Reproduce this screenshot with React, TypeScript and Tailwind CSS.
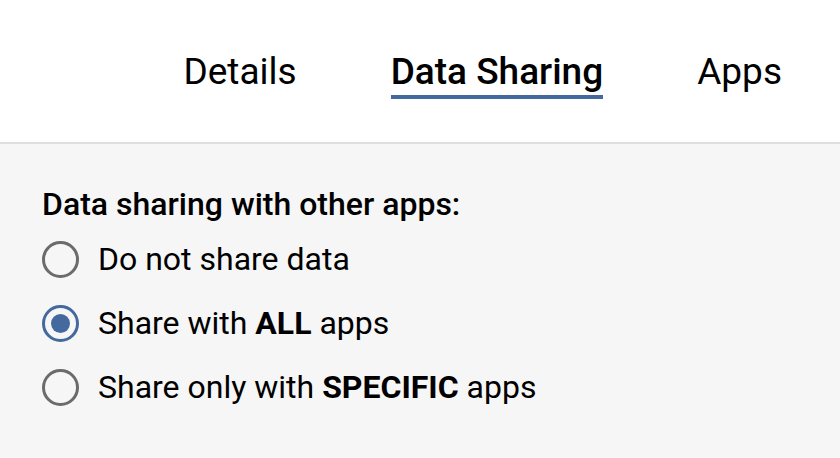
import React from "react"

const options = [
  { key: "none", label: <>Do not share data</> },
  { key: "all", label: <>Share with <b className="font-bold">ALL</b> apps</> },
  { key: "specific", label: <>Share only with <b className="font-bold">SPECIFIC</b> apps</> },
]

function Radio({ checked }: { checked: boolean }) {
  return (
    <span
      className={`flex items-center justify-center w-[37px] h-[37px] rounded-full border-[3px] shrink-0 ${
        checked ? "border-[#44699f]" : "border-[#6b6b6b]"
      }`}
    >
      {checked && <span className="w-[19px] h-[19px] rounded-full bg-[#44699f]" />}
    </span>
  )
}

export default function App() {
  const [selected, setSelected] = React.useState("all")

  return (
    <div className="w-[840px] h-[458px] flex flex-col bg-[#f6f6f6] text-black" style={{ fontFamily: "Roboto, sans-serif" }}>
      {/* tabs */}
      <div className="h-[144px] bg-white border-b-2 border-[#dedede] flex items-start justify-end pr-[58px] pt-[50px] gap-[94px] shrink-0">
        <button className="text-[37px] leading-[44px]">Details</button>
        <button className="text-[37px] leading-[44px] font-medium pb-[1px] border-b-[4px] border-[#44699f]">Data Sharing</button>
        <button className="text-[37px] leading-[44px]">Apps</button>
      </div>

      {/* content */}
      <div className="px-[42px] pt-[39px]">
        <p className="text-[32px] leading-[42px] font-medium mb-[2px]">Data sharing with other apps:</p>
        <div className="flex flex-col">
          {options.map((o) => (
            <label key={o.key} className="flex items-center gap-[19px] h-[64px] cursor-pointer" onClick={() => setSelected(o.key)}>
              <Radio checked={selected === o.key} />
              <span className="text-[32px]">{o.label}</span>
            </label>
          ))}
        </div>
      </div>
    </div>
  )
}
